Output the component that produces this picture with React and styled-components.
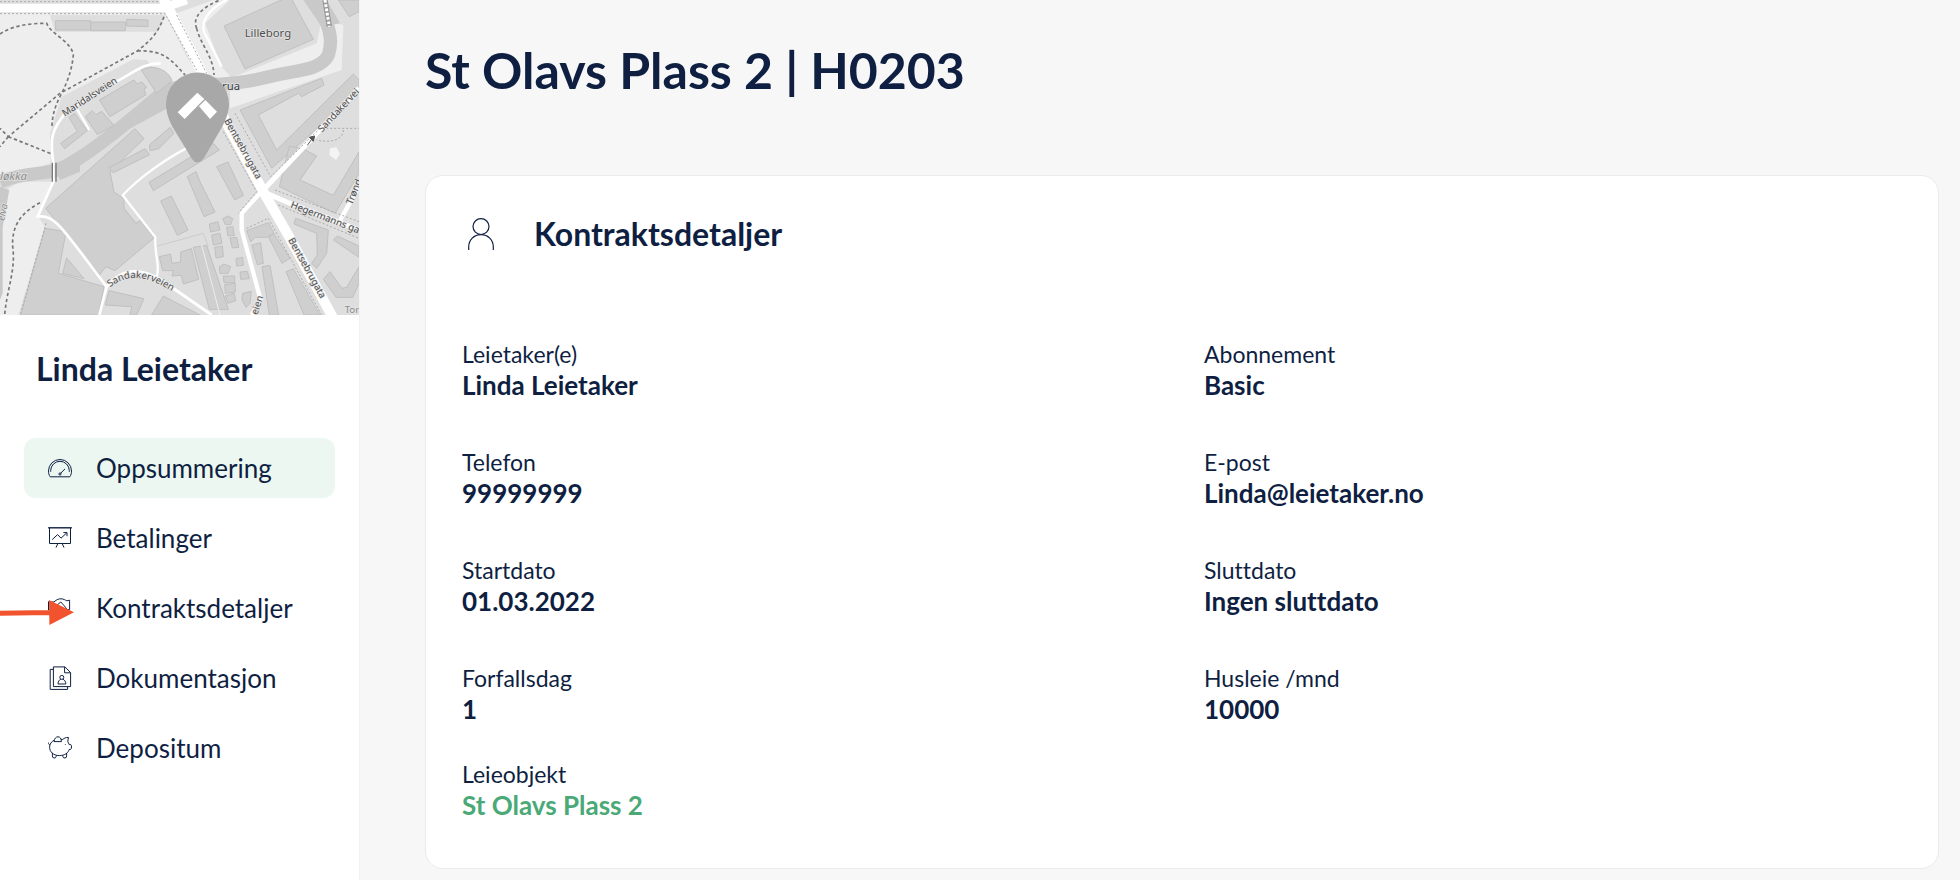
import React from 'react'
import styled, { createGlobalStyle } from 'styled-components'

const navItems = [
  { label: 'Oppsummering', href: '#oppsummering', icon: 'gauge' },
  { label: 'Betalinger', href: '#betalinger', icon: 'board' },
  { label: 'Kontraktsdetaljer', href: '#kontraktsdetaljer', icon: 'contract' },
  { label: 'Dokumentasjon', href: '#dokumentasjon', icon: 'documents' },
  { label: 'Depositum', href: '#depositum', icon: 'piggy' },
]

const fields = [
  { label: 'Leietaker(e)', value: 'Linda Leietaker' },
  { label: 'Abonnement', value: 'Basic' },
  { label: 'Telefon', value: '99999999' },
  { label: 'E-post', value: 'Linda@leietaker.no' },
  { label: 'Startdato', value: '01.03.2022' },
  { label: 'Sluttdato', value: 'Ingen sluttdato' },
  { label: 'Forfallsdag', value: '1' },
  { label: 'Husleie /mnd', value: '10000' },
]

const icons = {
  gauge: (
    <>
      <path d='M2.2 20.8 C1 19.2 .5 17.2 .5 15 A11.5 11.5 0 0 1 23.5 15 C23.5 17.2 23 19.2 21.8 20.8 Z' />
      <path d='M2.7 15.8 V14.6 A9.3 9.3 0 0 1 21.3 14.6 V15.8' />
      <path d='M12.7 17.2 L17 12.9' />
      <circle cx='12' cy='18' r='1.1' />
    </>
  ),
  board: (
    <>
      <path d='M.2 1.8 H23.8' strokeWidth='1.4' />
      <path d='M1.5 2 V17.5 H22.5 V2' />
      <path d='M9.8 17.6 L8 21.6 M14.2 17.6 L16 21.6' />
      <path d='M4.2 13.6 L9.6 8.6 L13 12.2 L18.6 7' />
      <path d='M15.4 6.6 H19 V10.2' />
    </>
  ),
  contract: (
    <>
      <path d='M.5 5.5 V14 H4' />
      <path d='M.5 6 H6 C9 3.2 10.8 2.8 13 2.8 C15.5 2.8 17.5 4.2 18.8 4.8 L21.6 4.2 V13.6 H19' />
      <path d='M8.5 9.5 L12.8 6 C15 8.4 17.5 11 19 13.5 L14 18 L4 13.6' />
    </>
  ),
  documents: (
    <>
      <path d='M5.4 .9 H17 L22.6 6.6 V20.6 H5.4 Z' />
      <path d='M16.6 1 V6.8 H22.4' />
      <path d='M5.2 3.4 H2.2 V23.4 H19.6 V20.8' />
      <circle cx='13.8' cy='11.4' r='2' />
      <path d='M10 18 C10 15.4 11.4 13.8 12.8 13.2 M14.8 13.2 C16.4 13.8 17.8 15.4 17.8 18 H10' />
    </>
  ),
  piggy: (
    <>
      <path d='M6.2 4.2 C3.4 5.6 1.6 8 1.6 11.2 C1.6 15.6 5.2 19.6 11.4 19.6 C17 19.6 20.4 16.6 21.2 13.4 H22.6 C23.8 12.4 23.8 9.6 22.8 8.6 H21.2 C20.8 7.4 20.4 6.6 19.8 5.8 L20.4 1.4 C18.2 1.4 16.2 2 14.8 3.4 H12.8' />
      <path d='M6 5.6 C6.4 2.4 8 .8 10 .8 C12.2 .8 13.4 2.8 13.4 5.6 Z' />
      <path d='M1.6 8.6 C.6 8.4 .2 7.6 .5 6.6' />
      <path d='M4.4 17 V19.8 A1.9 1.9 0 0 0 8.2 20.4 V19.4 M14.8 19.4 V20.4 A1.9 1.9 0 0 0 18.6 19.8 V17' />
      <path d='M17.4 8.2 V8.9' />
    </>
  ),
}

const Icon = ({ name }) => (
  <NavIcon viewBox='0 0 24 24' aria-hidden='true'>{ icons[name] }</NavIcon>
)

const Arrow = () => (
  <Pointer viewBox='0 0 74 26' aria-hidden='true'>
    <path d='M0 10.8 L50 10 V15 L0 15.8 Z M49 0 L74 12.2 L49.4 25 Z' />
  </Pointer>
)

const Map = () => (
  <MapDrawing viewBox='0 0 1077 945' preserveAspectRatio='xMidYMid slice' role='img' aria-label='Kart'>
    <rect width='1077' height='945' fill='#dedede' />

    {/* parks */}
    <g fill='#eeeeee'>
      <path d='M0 40 H495 L560 170 L600 230 L500 250 L440 180 L400 178 L185 290 L150 400 L152 490 L0 540 Z' />
      <path d='M0 580 L60 545 L160 545 L115 650 L135 680 L55 945 H0 Z' />
      <path d='M530 40 L640 0 L690 0 L615 70 L665 200 L700 240 L690 250 L620 220 Z' />
      <path d='M690 235 L950 130 L965 60 L1030 75 L1025 210 L690 325 Z' />
    </g>
    <path d='M150 45 H495 L475 95 H165 Z' fill='#dedede' />

    {/* river */}
    <path d='M0 545 C90 510 160 530 215 488 C300 440 400 350 500 268 C600 250 690 260 800 232 C880 210 960 215 985 165 C1000 120 990 80 950 0' fill='none' stroke='#c9c9c9' strokeWidth='40' />
    <path d='M395 345 L510 250 L520 315 L400 380 L240 475 L240 515 L180 540 L165 505 Z' fill='#c9c9c9' />
    <path d='M0 560 L28 570 L8 680 L8 880 L0 900 Z' fill='#c9c9c9' />
    <path d='M910 0 H980 L1020 70 L965 80 Z' fill='#c9c9c9' />

    {/* buildings */}
    <g fill='#cfcfcf' stroke='#c0c0c0' strokeWidth='3'>
      <path d='M672 78 L870 -12 L940 118 L735 207 Z' />
      <path d='M167 62 H272 V90 H167 Z M272 66 H376 V92 H272 Z M380 58 L444 60 V80 L380 78 Z' />
      <path d='M1015 0 H1077 V35 L1048 50 Z' />
      <path d='M424 210 C460 190 505 210 516 242 L470 280 L440 235 Z' />
      <path d='M298 300 L402 240 L412 252 L425 245 L440 262 L432 268 L438 284 L330 350 Z' />
      <path d='M256 350 L276 332 L288 344 L305 334 L342 376 L292 404 Z' />
      <path d='M182 430 L232 394 L207 352 L224 340 L262 392 L194 446 Z' />
      <path d='M137 625 L405 386 L432 416 L330 515 L342 576 L372 596 L372 625 L408 670 L422 660 L462 714 L345 812 L318 800 L298 825 Z' />
      <path d='M326 504 L435 446 L449 464 L340 518 Z' />
      <path d='M448 435 L510 382 L522 400 L476 446 L450 452 Z' />
      <path d='M447 547 L640 430 L658 450 L460 572 Z' />
      <path d='M482 603 L514 588 L564 690 L532 706 Z' />
      <path d='M562 530 L588 515 L600 545 L645 636 L612 650 Z' />
      <path d='M650 500 L684 486 L730 586 L704 600 Z' />
      <path d='M720 330 L965 235 L972 255 L905 290 L895 280 L775 345 L830 450 L1060 222 L1077 240 L1077 275 L815 505 Z' />
      <path d='M868 438 L900 445 L915 450 L950 468 L900 540 L1000 586 L1077 455 V520 L1005 640 L838 560 Z' />
      <path d='M887 655 L985 690 L980 760 L950 805 L935 790 L952 765 L950 700 L882 672 Z' />
      <path d='M1000 720 L1012 708 L1077 738 V772 Z' />
      <path d='M970 838 L990 815 L1026 865 L1040 862 L1077 800 V850 L1058 892 H1008 Z' />
      <path d='M135 685 L198 695 L175 820 L312 860 L295 945 H62 Z' />
      <path d='M200 774 L252 836 L188 820 Z' />
      <path d='M327 872 L432 896 L410 945 H390 L395 920 L316 915 Z' />
      <path d='M455 945 L490 888 L600 945 Z' />
      <path d='M478 770 L512 762 L516 790 L542 786 V756 L574 746 L596 838 L550 852 L544 826 L516 828 L520 812 L488 812 Z' />
      <path d='M580 742 L620 736 L685 928 L628 928 Z' />
      <path d='M628 672 L654 665 L660 690 L632 696 Z M635 705 L660 700 L666 730 L640 735 Z M644 742 L667 738 L670 770 L648 774 Z' />
      <path d='M668 656 L684 648 L698 656 L692 674 L676 674 Z M680 682 L698 680 L703 706 L684 708 Z M690 714 L710 712 L716 742 L697 744 Z' />
      <path d='M658 800 L672 792 L692 800 L684 820 H660 Z M708 776 L728 772 L730 796 L710 798 Z M670 828 H704 V848 H672 Z M674 854 L706 850 V876 L676 880 Z M720 816 L742 814 L748 836 L722 838 Z M676 888 L702 880 L708 902 L684 910 Z M728 880 L754 874 L750 910 L738 922 L726 900 Z' />
      <path d='M740 692 L805 668 L822 700 L800 712 L765 712 L752 726 Z' />
      <path d='M755 735 L782 728 L790 790 L772 794 Z M786 800 L810 796 L836 945 H808 Z' />
      <path d='M805 710 L822 702 L870 775 L846 790 Z M858 815 L880 806 L960 945 H912 Z' />
    </g>
    <path d='M990 445 L1010 442 L1020 462 L1008 480 L988 465 Z' fill='#f4f4f4' />

    {/* streets */}
    <g fill='none' stroke='#ffffff' strokeLinejoin='round'>
      <path d='M0 24 H490 L560 0' strokeWidth='26' />
      <path d='M490 -5 L600 205 L680 370 L790 575 L870 715 L1000 955' strokeWidth='30' />
      <path d='M790 570 L950 400 L1077 265' strokeWidth='15' />
      <path d='M790 568 L725 640 V690 L782 900 L755 945' strokeWidth='13' />
      <path d='M800 580 L860 606 L1077 690' strokeWidth='15' />
      <path d='M1015 670 L1077 560' strokeWidth='13' />
      <path d='M482 190 C430 188 400 220 330 255 L205 330 C150 390 150 420 160 490 V545 L113 650 C165 640 190 690 320 860 L298 945' strokeWidth='8' />
      <path d='M320 860 C370 800 430 800 510 858 L635 945' strokeWidth='9' />
      <path d='M470 830 C482 800 462 760 466 712 L368 586 C410 540 500 470 590 430' strokeWidth='7' />
      <path d='M228 322 L268 390' strokeWidth='7' />
      <path d='M665 200 L612 95 C600 50 650 15 680 0' strokeWidth='7' />
      <path d='M605 735 L660 945' strokeWidth='3' stroke='#ededed' />
      <path d='M472 738 L610 700 L625 740' strokeWidth='3' stroke='#cccccc' />
    </g>

    {/* foot paths */}
    <g fill='none' stroke='#777777' strokeWidth='5' strokeDasharray='10 8'>
      <path d='M0 102 C40 75 90 70 140 70 C150 100 215 125 220 165 C215 220 195 260 180 290 C160 330 158 350 155 385' />
      <path d='M492 50 C470 110 440 130 412 153 L180 280 L25 410 L0 385 M25 410 L155 462' />
      <path d='M412 153 C490 150 510 175 555 225' />
      <path d='M590 85 C600 130 640 170 642 225 M590 85 C575 50 610 20 660 0' />
      <path d='M25 410 L0 440 M120 608 C60 640 35 680 38 740 C48 810 20 870 14 945' />
      <path d='M975 0 L988 80' stroke='#999999' strokeWidth='16' strokeDasharray='none' />
      <path d='M975 0 L988 80' stroke='#ffffff' strokeWidth='9' strokeDasharray='8 5' />
    </g>
    <g fill='none' stroke='#aaaaaa' strokeWidth='3' strokeDasharray='6 6'>
      <path d='M0 5 H475 M0 41 H495 L590 210 M530 45 L620 220' />
      <path d='M138 670 L62 940' />
      <path d='M705 340 L812 530 L960 385 L1077 385 M670 395 L770 575 L715 640 M1030 390 C1030 420 990 430 950 420' />
      <path d='M825 570 L1077 665 M835 615 L1077 715 M740 685 L805 655 L965 945' />
    </g>
    <path d='M157 488 V545 M168 488 V545' stroke='#777777' strokeWidth='4' />
    <path d='M922 436 L938 414 M928 412 L944 408 L940 424 Z' stroke='#555555' strokeWidth='3' fill='#555555' />

    <MapText x='734' y='111' $size={ 34 }>Lilleborg</MapText>
    <MapText x='666' y='270' $dark $size={ 34 }>rua</MapText>
    <MapText x='0' y='0' transform='translate(194 350) rotate(-33)'>Maridalsveien</MapText>
    <MapText x='0' y='0' transform='translate(672 362) rotate(61)'>Bentsebrugata</MapText>
    <MapText x='0' y='0' transform='translate(864 720) rotate(61)'>Bentsebrugata</MapText>
    <MapText x='0' y='0' transform='translate(966 398) rotate(-47)'>Sandakervei</MapText>
    <MapText x='0' y='0' transform='translate(870 622) rotate(21)'>Hegermanns ga</MapText>
    <MapText x='0' y='0' transform='translate(1056 616) rotate(-68)'>Trønd</MapText>
    <MapText x='0' y='0' transform='translate(772 946) rotate(-72)'>eien</MapText>
    <MapText x='1034' y='940' $soft>Tor</MapText>
    <MapText x='0' y='540' $soft $italic $size={ 34 }>løkka</MapText>
    <MapText x='0' y='0' transform='translate(12 664) rotate(-78)' $soft $italic>elva</MapText>
    <path id='curve' d='M330 862 C380 822 440 822 525 880' fill='none' />
    <MapText><textPath href='#curve'>Sandakerveien</textPath></MapText>

    {/* pin with roof logo */}
    <path d='M592 487 C582 487 578 480 572 470 L520 385 C506 360 498 335 498 312 A94 94 0 0 1 687 312 C687 335 678 360 664 385 L614 470 C608 480 602 487 592 487 Z' fill='#a8a8a8' />
    <path d='M592 278 L613 297 L554 357 L533 337 Z' fill='#ffffff' />
    <path d='M616 300 L651 335 L630 357 L597 319 Z' fill='#ffffff' />
  </MapDrawing>
)

const App = () => (
  <>
    <GlobalStyle />
    <Page>
      <Sidebar>
        <Map />
        <TenantName>Linda Leietaker</TenantName>
        <nav>
          <NavList>
            { navItems.map((item, i) => (
              <NavItem key={ item.label }>
                <NavLink href={ item.href } $active={ i === 0 }>
                  <Icon name={ item.icon } />
                  { item.label }
                </NavLink>
                { item.icon === 'contract' && <Arrow /> }
              </NavItem>
            )) }
          </NavList>
        </nav>
      </Sidebar>
      <Main>
        <Title>St Olavs Plass 2 | H0203</Title>
        <Card>
          <CardHeader>
            <UserIcon viewBox='0 0 26 32' aria-hidden='true'>
              <ellipse cx='13' cy='8.6' rx='8' ry='7.9' />
              <path d='M.7 32 V29 C.7 22 6 16.6 13 16.6 C20 16.6 25.3 22 25.3 29 V32' />
            </UserIcon>
            <CardTitle>Kontraktsdetaljer</CardTitle>
          </CardHeader>
          <Fields>
            { fields.map(field => (
              <div key={ field.label }>
                <Label>{ field.label }</Label>
                <Value>{ field.value }</Value>
              </div>
            )) }
          </Fields>
          <LeaseObject>
            <Label>Leieobjekt</Label>
            <Value><ObjectLink href='#leieobjekt'>St Olavs Plass 2</ObjectLink></Value>
          </LeaseObject>
        </Card>
      </Main>
    </Page>
  </>
)

export default App

const GlobalStyle = createGlobalStyle`
  :root {
    --navy: #0f1f42;
    --green: #4aa977;
    --mint: #ecf7f1;
    --line: #ebebeb;
  }
  *, *::before, *::after {
    box-sizing: border-box;
  }
  body {
    margin: 0;
    background-color: #f7f7f7;
    color: var(--navy);
    font-family: Lato, 'Open Sans', sans-serif;
    font-variant-ligatures: none;
  }
`

const Page = styled.div`
  display: flex;
  min-height: 100vh;
`

const Sidebar = styled.aside`
  flex: 0 0 360px;
  background-color: #fff;
  border-right: 1px solid #f2f2f2;
`

const MapDrawing = styled.svg`
  display: block;
  width: 100%;
  height: 315px;
`

const MapText = styled.text`
  font-family: 'Noto Sans', sans-serif;
  font-size: ${p => p.$size || 29}px;
  font-style: ${p => p.$italic ? 'italic' : 'normal'};
  fill: ${p => p.$soft ? '#8c8c8c' : p.$dark ? '#3c3c3c' : '#4c4c4c'};
  stroke: #e4e4e4;
  stroke-width: 4px;
  paint-order: stroke;
`

const TenantName = styled.h2`
  margin: 34px 36px 49px;
  font-size: 32px;
  font-weight: 700;
  line-height: 40px;
`

const NavList = styled.ul`
  display: flex;
  flex-direction: column;
  gap: 10px;
  margin: 0;
  padding: 0 24px;
  list-style: none;
`

const NavItem = styled.li`
  position: relative;
`

const NavLink = styled.a`
  display: flex;
  align-items: center;
  gap: 24px;
  height: 60px;
  padding: 0 24px;
  border-radius: 12px;
  background-color: ${p => p.$active ? 'var(--mint)' : 'transparent'};
  color: inherit;
  font-size: 26px;
  text-decoration: none;
`

const NavIcon = styled.svg`
  flex: none;
  width: 24px;
  height: 24px;
  fill: none;
  stroke: var(--navy);
  stroke-width: 1;
`

/* lies over the icon it points at */
const Pointer = styled.svg`
  position: absolute;
  top: 22px;
  left: -24px;
  width: 74px;
  height: 26px;
  fill: #f0532d;
  pointer-events: none;
`

const Main = styled.main`
  flex: 1;
  min-width: 0;
  padding: 40px 21px 11px 65px;
`

const Title = styled.h1`
  margin: 0 0 75px;
  font-size: 50px;
  font-weight: 700;
  line-height: 60px;
`

const Card = styled.section`
  padding: 36px 36px 47px;
  background-color: #fff;
  border: 1px solid var(--line);
  border-radius: 18px;
`

const CardHeader = styled.header`
  display: flex;
  align-items: center;
  gap: 40px;
  padding-left: 6px;
`

const UserIcon = styled.svg`
  flex: none;
  width: 26px;
  height: 40px;
  fill: none;
  stroke: var(--navy);
  stroke-width: 1.2;
`

const CardTitle = styled.h2`
  margin: 0;
  font-size: 32px;
  font-weight: 700;
  line-height: 44px;
`

const Fields = styled.dl`
  display: grid;
  grid-template-columns: 1fr 1fr;
  gap: 46px 44px;
  margin: 83px 0 34px;
`

const LeaseObject = styled.dl`
  margin: 0;
`

const Label = styled.dt`
  font-size: 23px;
  line-height: 30px;
`

const Value = styled.dd`
  margin: 0;
  font-size: 26px;
  font-weight: 700;
  line-height: 32px;
`

const ObjectLink = styled.a`
  color: var(--green);
  text-decoration: none;
`
